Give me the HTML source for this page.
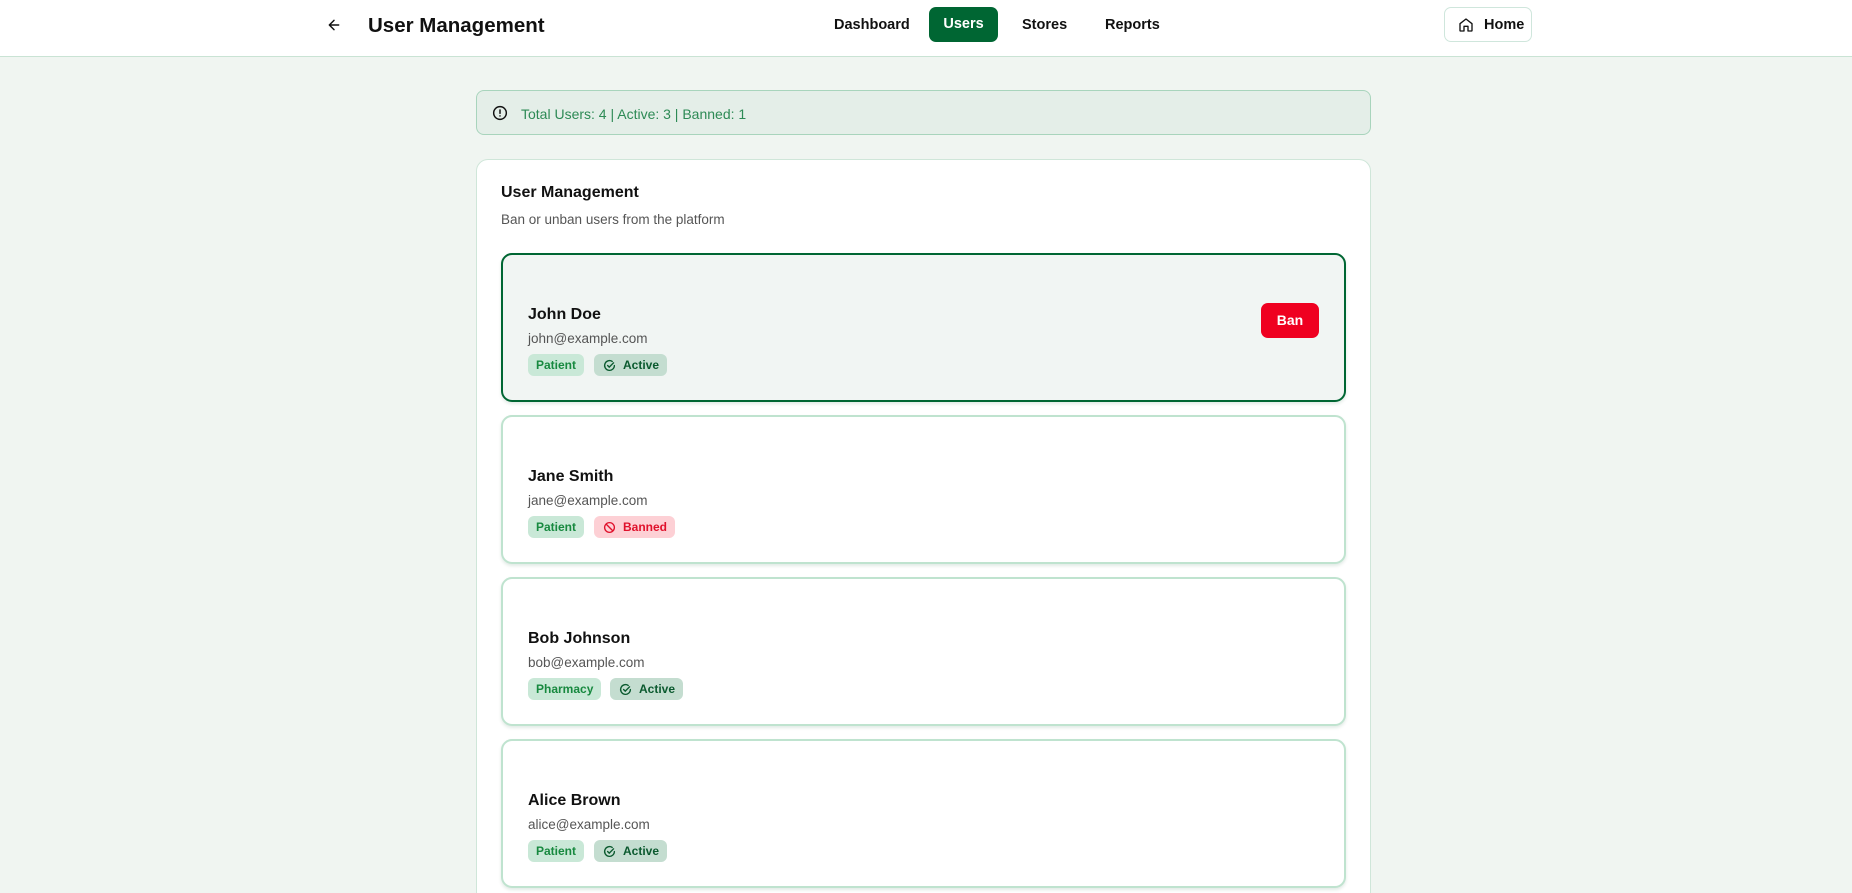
<!DOCTYPE html>
<html style="height:893px;overflow:hidden"><head><meta charset="utf-8"><style>
*{box-sizing:border-box;margin:0;padding:0}
body{width:1852px;height:893px;overflow:hidden;background:#f0f5f1;font-family:"Liberation Sans",Arial,sans-serif;color:#111;position:relative}
.hdr{position:absolute;left:0;top:0;width:1852px;height:57px;background:#fff;border-bottom:1px solid #c9e3d4}
.abs{position:absolute}
.nav{font-size:14.5px;font-weight:bold;color:#111;top:17px}
.users{left:929px;top:7px;width:69px;height:35px;background:#006633;color:#fff;border-radius:7px;font-size:14.5px;font-weight:bold;text-align:center;line-height:35px}
.home{left:1444px;top:7px;width:88px;height:35px;border:1px solid #cfe6dc;border-radius:7px;font-size:14.5px;font-weight:bold;line-height:34px;padding-left:39px;background:#fff}
.banner{left:476px;top:90px;width:895px;height:45px;background:#e4eee8;border:1px solid #a8d4bc;border-radius:8px}
.card{left:476px;top:159px;width:895px;height:745px;background:#fff;border:1px solid #cfe6d9;border-radius:12px}
.u{position:absolute;left:501px;width:845px;height:149px;background:#fff;border:2px solid #bfe3cf;border-radius:11px;box-shadow:0 2px 3px rgba(0,80,40,.12)}
.u.sel{background:#f1f5f3;border-color:#006633}
.nm{position:absolute;left:25px;top:51px;font-size:16px;font-weight:bold}
.em{position:absolute;left:25px;top:76px;font-size:13.5px;color:#555}
.bd{position:absolute;top:99px;height:22px;border-radius:6px;font-size:12px;font-weight:bold;line-height:22px;padding:0 8px}
.pt{left:25px;background:#c9e8d7;color:#17893f}
.ac{background:#c4ddd0;color:#0b5a2f;padding-left:29px}
.bn{background:#fdd0d5;color:#e0112c;padding-left:29px}
.bd svg{position:absolute;left:9px;top:5px}
.ban{position:absolute;right:25px;top:48px;width:58px;height:35px;background:#ef0020;color:#fff;border-radius:7px;font-weight:bold;font-size:14px;text-align:center;line-height:35px}
</style></head><body>
<div class="hdr">
<svg class="abs" style="left:326px;top:17px" width="16" height="16" viewBox="0 0 24 24" fill="none" stroke="#111" stroke-width="2.2" stroke-linecap="round" stroke-linejoin="round"><path d="M19 12H5M12 19l-7-7 7-7"/></svg>
<div class="abs" style="left:368px;top:14px;font-size:20.5px;font-weight:bold">User Management</div>
<div class="abs nav" style="left:834px">Dashboard</div>
<div class="abs users">Users</div>
<div class="abs nav" style="left:1022px">Stores</div>
<div class="abs nav" style="left:1105px">Reports</div>
<div class="abs home"><svg class="abs" style="left:13px;top:9px" width="16" height="16" viewBox="0 0 24 24" fill="none" stroke="#111" stroke-width="2" stroke-linejoin="round"><path d="M3 10l9-7 9 7v10a1 1 0 0 1-1 1h-5v-7H9v7H4a1 1 0 0 1-1-1z"/></svg>Home</div>
</div>
<div class="abs banner">
<svg class="abs" style="left:15px;top:14px" width="16" height="16" viewBox="0 0 24 24" fill="none" stroke="#111" stroke-width="2.2" stroke-linecap="round"><circle cx="12" cy="12" r="9.5"/><path d="M12 7.5v5M12 16.3v.2"/></svg>
<div class="abs" style="left:44px;top:15px;font-size:14px;color:#2d8a55">Total Users: 4 | Active: 3 | Banned: 1</div>
</div>
<div class="abs card">
<div class="abs" style="left:24px;top:24px;font-size:16px;font-weight:bold">User Management</div>
<div class="abs" style="left:24px;top:52px;font-size:13.5px;color:#555">Ban or unban users from the platform</div>
</div>
<div class="u sel" style="top:253px"><div class="nm">John Doe</div><div class="em">john@example.com</div><div class="bd pt">Patient</div><div class="bd ac" style="left:91px"><svg width="13" height="13" viewBox="0 0 24 24" fill="none" stroke="#0b5a2f" stroke-width="2.5" stroke-linecap="round"><path d="M21 12a9 9 0 1 1-4-7.5"/><path d="M8.5 12l3 3 8-8"/></svg>Active</div><div class="ban">Ban</div></div>
<div class="u" style="top:415px"><div class="nm">Jane Smith</div><div class="em">jane@example.com</div><div class="bd pt">Patient</div><div class="bd bn" style="left:91px"><svg width="13" height="13" viewBox="0 0 24 24" fill="none" stroke="#e0112c" stroke-width="2.5"><circle cx="12" cy="12" r="9"/><path d="M5.6 5.6l12.8 12.8"/></svg>Banned</div></div>
<div class="u" style="top:577px"><div class="nm">Bob Johnson</div><div class="em">bob@example.com</div><div class="bd pt">Pharmacy</div><div class="bd ac" style="left:107px"><svg width="13" height="13" viewBox="0 0 24 24" fill="none" stroke="#0b5a2f" stroke-width="2.5" stroke-linecap="round"><path d="M21 12a9 9 0 1 1-4-7.5"/><path d="M8.5 12l3 3 8-8"/></svg>Active</div></div>
<div class="u" style="top:739px"><div class="nm">Alice Brown</div><div class="em">alice@example.com</div><div class="bd pt">Patient</div><div class="bd ac" style="left:91px"><svg width="13" height="13" viewBox="0 0 24 24" fill="none" stroke="#0b5a2f" stroke-width="2.5" stroke-linecap="round"><path d="M21 12a9 9 0 1 1-4-7.5"/><path d="M8.5 12l3 3 8-8"/></svg>Active</div></div>
</body></html>
